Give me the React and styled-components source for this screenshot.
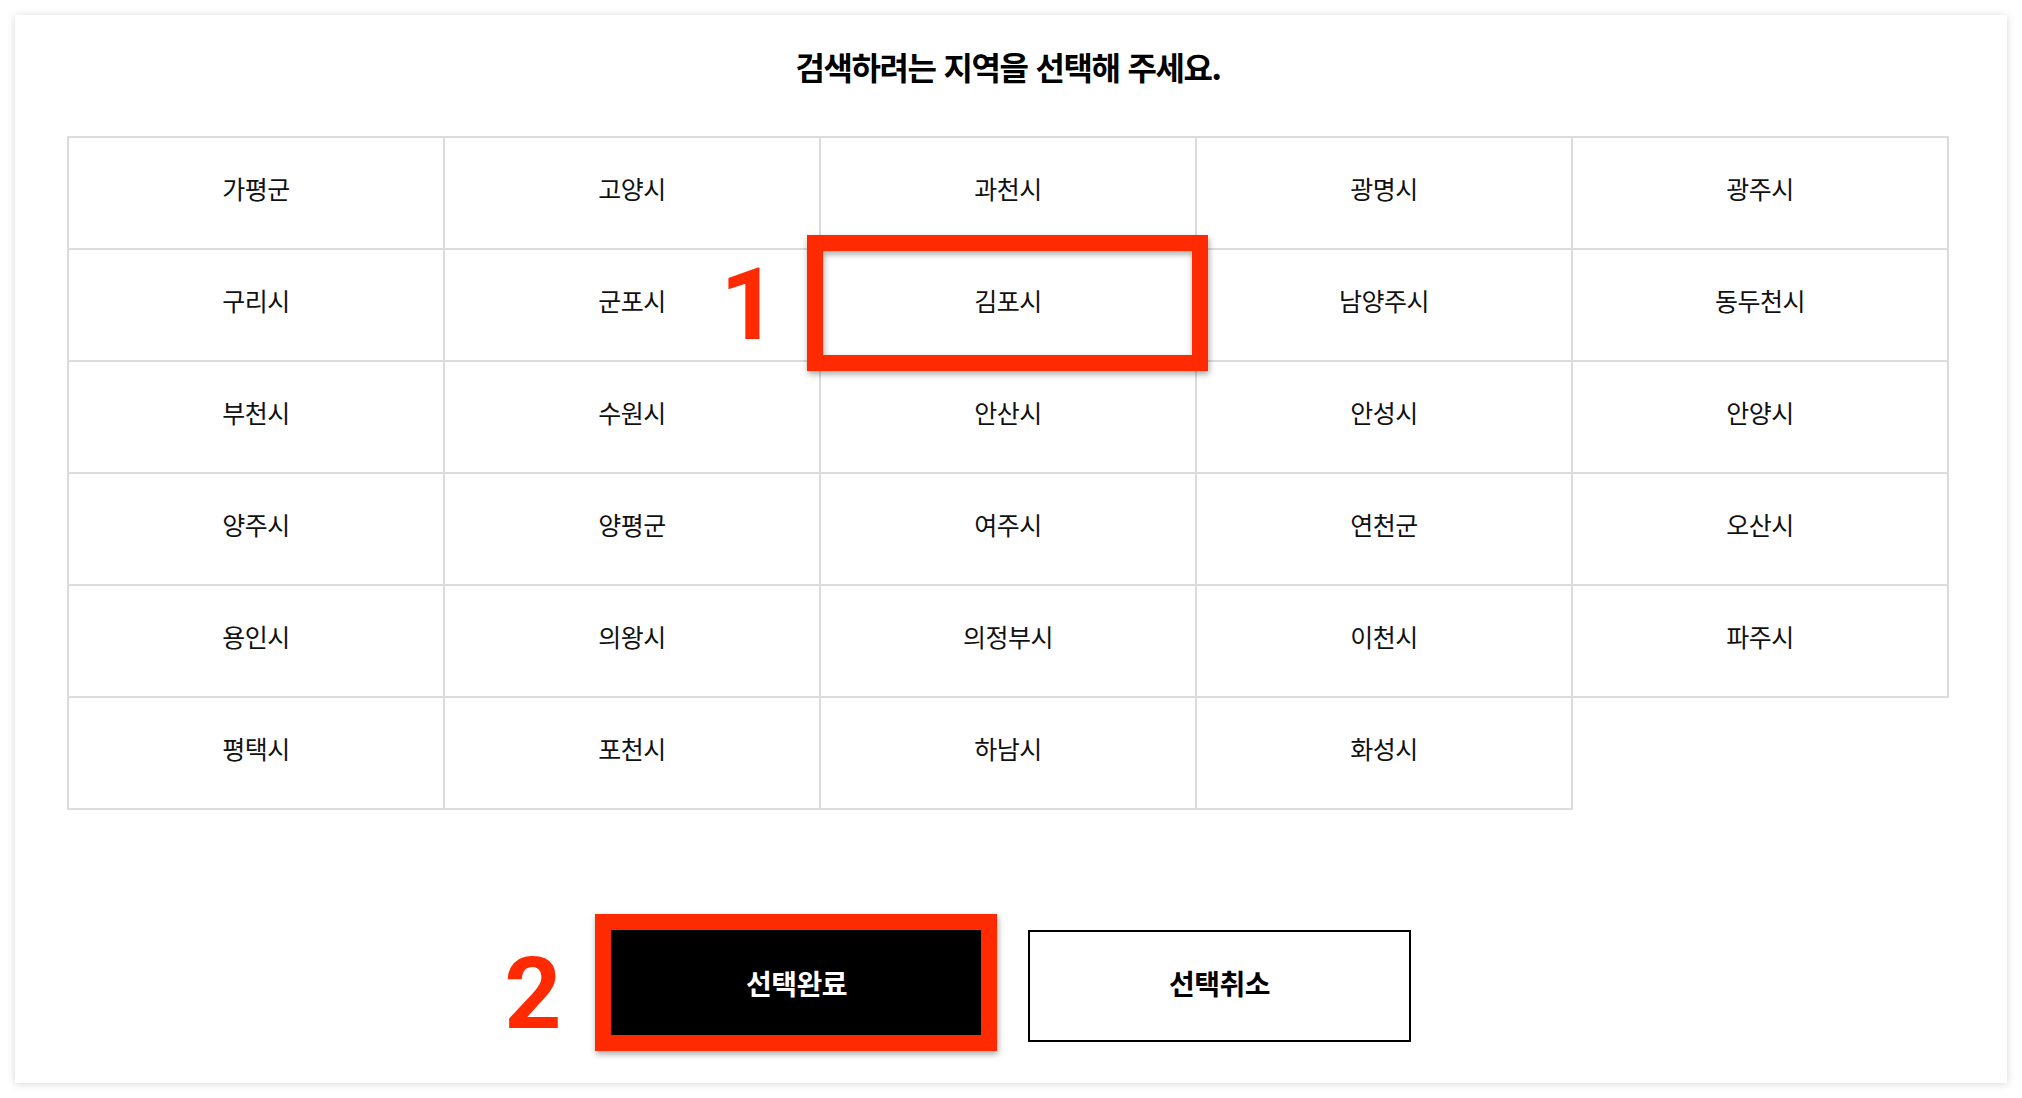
import React from "react";
import styled, { createGlobalStyle } from "styled-components";

const GlobalStyle = createGlobalStyle`
  html, body { margin: 0; padding: 0; background: #fff; }
  body {
    font-family: "Noto Sans CJK KR", "Noto Sans", sans-serif;
    color: #111;
  }
  * { box-sizing: border-box; }
`;

const Page = styled.div`
  padding: 15px;
`;

const Card = styled.section`
  width: 1992px;
  height: 1068px;
  background: #fff;
  box-shadow: 0 1px 8px rgba(0, 0, 0, 0.16);
  padding: 31px 58px 0 52px;
  display: flex;
  flex-direction: column;
`;

const Title = styled.h2`
  margin: 0;
  height: 40px;
  line-height: 40px;
  font-size: 32px;
  font-weight: 700;
  letter-spacing: -1.4px;
  word-spacing: 2px;
  text-align: center;
  color: #000;
`;

const Grid = styled.div`
  margin-top: 50px;
  display: grid;
  grid-template-columns: repeat(5, 376px);
  grid-auto-rows: 112px;
  width: 1882px;
  border-top: 2px solid #dcdcdc;
  border-left: 2px solid #dcdcdc;
`;

const Cell = styled.div`
  position: relative;
  display: flex;
  align-items: center;
  justify-content: center;
  padding-bottom: 10px;
  border-right: 2px solid #dcdcdc;
  border-bottom: 2px solid #dcdcdc;
  font-size: 25px;
  letter-spacing: -0.5px;
  color: #111;
  cursor: pointer;
`;

const Actions = styled.div`
  margin-top: 120px;
  width: 1882px;
  display: flex;
  justify-content: center;
  gap: 40px;
`;

const Button = styled.button`
  position: relative;
  width: 383px;
  height: 112px;
  padding: 0 0 6px;
  border: 2px solid #000;
  background: ${(p) => (p.$primary ? "#000" : "#fff")};
  color: ${(p) => (p.$primary ? "#fff" : "#000")};
  font-family: inherit;
  font-size: 28px;
  font-weight: 700;
  letter-spacing: -0.5px;
  cursor: pointer;
`;

const Annotation = styled.span`
  position: absolute;
  top: ${(p) => p.$top}px;
  left: ${(p) => p.$left}px;
  width: ${(p) => p.$w}px;
  height: ${(p) => p.$h}px;
  pointer-events: none;
  z-index: 2;
`;

const Frame = styled.span`
  position: absolute;
  inset: 0;
  border: 16px solid #ff2a00;
  filter: drop-shadow(1px 3px 3px rgba(0, 0, 0, 0.35));
`;

const Step = styled.span`
  position: absolute;
  top: ${(p) => p.$top}px;
  left: ${(p) => p.$left}px;
  width: 60px;
  font-family: Roboto, "Liberation Sans", sans-serif;
  font-size: 100px;
  line-height: 100px;
  font-weight: 700;
  color: #ff2a00;
  text-align: center;
  letter-spacing: 0;
`;

const regions = [
  "가평군", "고양시", "과천시", "광명시", "광주시",
  "구리시", "군포시", "김포시", "남양주시", "동두천시",
  "부천시", "수원시", "안산시", "안성시", "안양시",
  "양주시", "양평군", "여주시", "연천군", "오산시",
  "용인시", "의왕시", "의정부시", "이천시", "파주시",
  "평택시", "포천시", "하남시", "화성시",
];

export default function App() {
  return (
    <>
      <GlobalStyle />
      <Page>
        <Card>
          <Title>검색하려는 지역을 선택해 주세요.</Title>
          <Grid>
            {regions.map((name) => (
              <Cell key={name}>
                {name}
                {name === "김포시" && (
                  <Annotation $top={-15} $left={-14} $w={401} $h={136}>
                    <Frame />
                    <Step $top={20} $left={-88}>1</Step>
                  </Annotation>
                )}
              </Cell>
            ))}
          </Grid>
          <Actions>
            <Button $primary>
              선택완료
              <Annotation $top={-18} $left={-12} $w={402} $h={137}>
                <Frame />
                <Step $top={30} $left={-92}>2</Step>
              </Annotation>
            </Button>
            <Button>선택취소</Button>
          </Actions>
        </Card>
      </Page>
    </>
  );
}
